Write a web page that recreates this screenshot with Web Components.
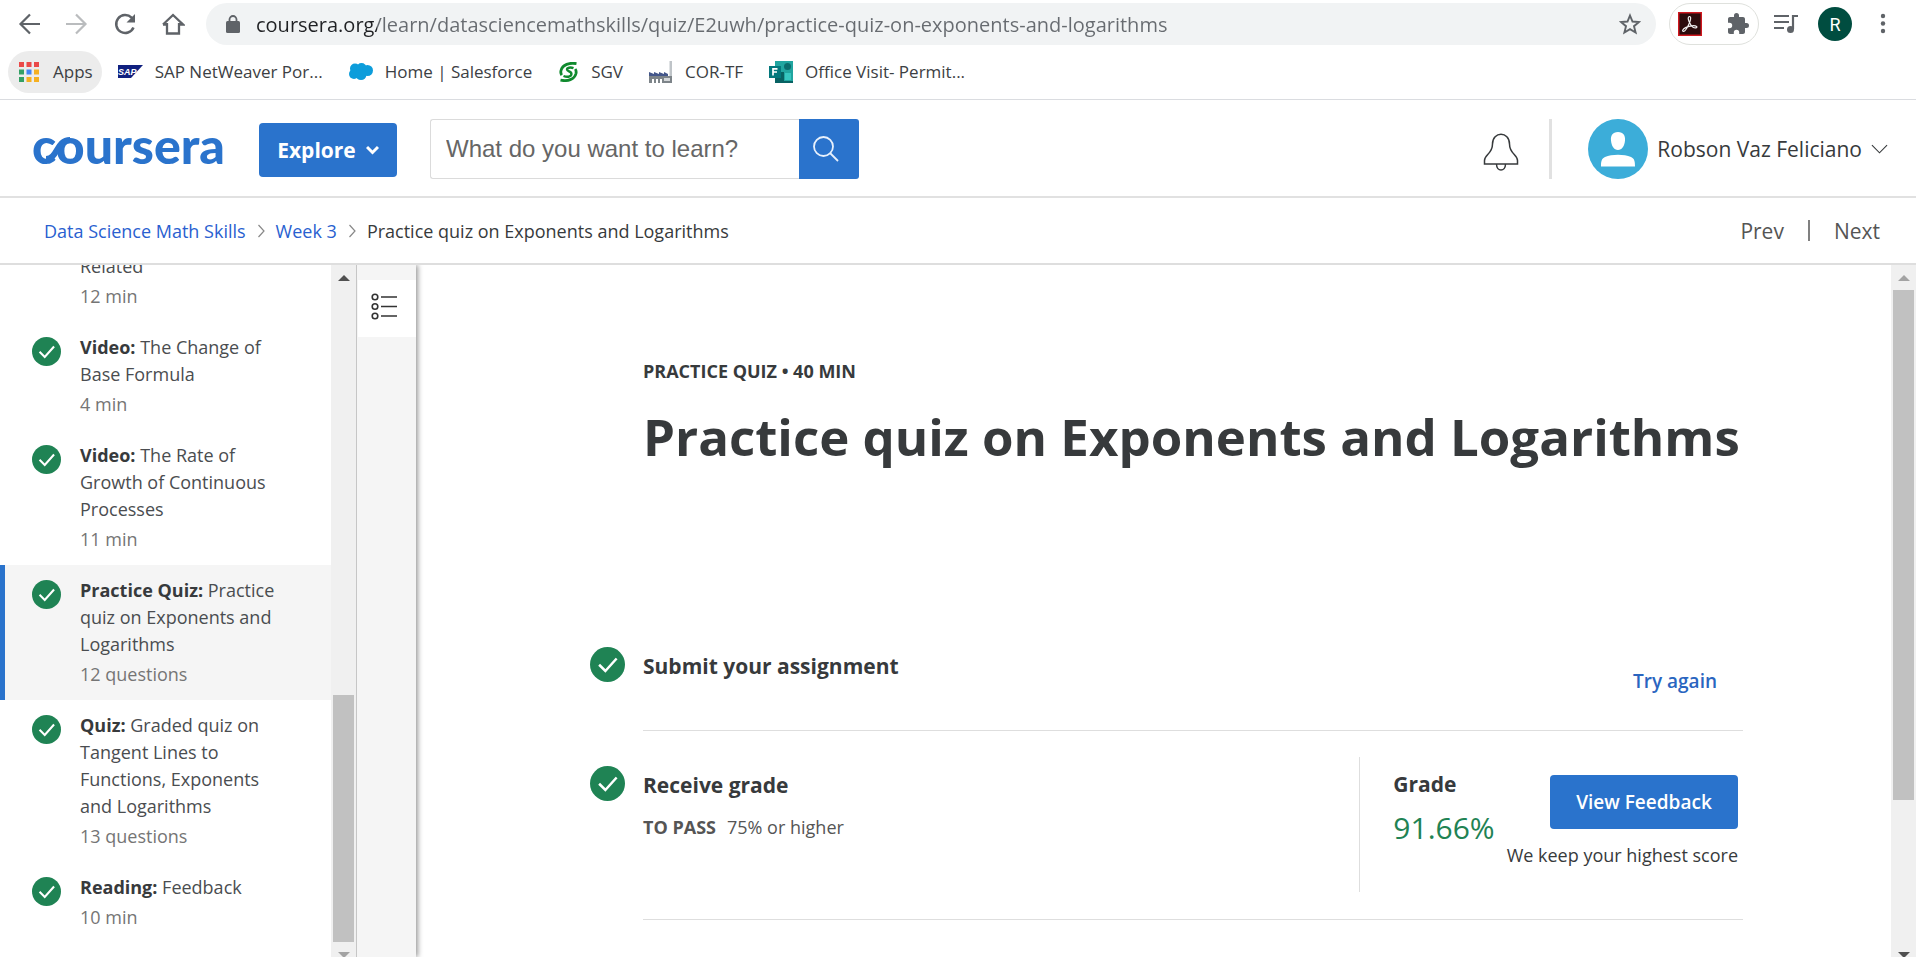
<!DOCTYPE html>
<html lang="en">
<head>
<meta charset="utf-8">
<title>Practice quiz on Exponents and Logarithms | Coursera</title>
<style>
html, body { margin: 0; height: 100%; }
body { background: #fff; color: #373a3c; font-family: "Open Sans", "Noto Sans", sans-serif; overflow: hidden; }
</style>
</head>
<body>
<quiz-app></quiz-app>

<script>
const base = `*{box-sizing:border-box}button{font:inherit;color:inherit;background:none;border:0;padding:0;margin:0;display:flex;align-items:center;justify-content:center;cursor:pointer}a{text-decoration:none;color:inherit}svg{display:block;flex:none}`;
function define(name, css, html, init) {
  customElements.define(name, class extends HTMLElement {
    connectedCallback() {
      if (this.shadowRoot) return;
      const root = this.attachShadow({ mode: 'open' });
      root.innerHTML = `<style>${base}${css}</style>` + (typeof html === 'function' ? html(this) : html);
      if (init) init(this, root);
    }
  });
}

define('check-mark',
  `:host{display:block;flex:none;width:var(--mark,29px);height:var(--mark,29px)}svg{width:100%;height:100%}`,
  `<svg viewBox="0 0 28 28" role="img" aria-label="Completed"><circle cx="14" cy="14" r="14" fill="#1f8354"/><path d="M7.300 14.200l5 5 9-10" fill="none" stroke="#fff" stroke-width="2"/></svg>`);

define('scroll-bar',
  `:host{display:flex;flex-direction:column;flex:none;width:25px;height:calc(100% + 10px);padding:0 2px;background:#f0f0f0}
   button{height:25px;flex:none;width:100%}.thumb{background:#c1c1c1}`,
  el => `<button aria-label="Scroll up"><svg width="12" height="6"><path d="M0 6L6 0l6 6z" fill="${el.getAttribute('up')}"/></svg></button>
   <div style="flex:${el.getAttribute('before')} 0 0"></div><div class="thumb" style="flex:${el.getAttribute('thumb')} 0 0"></div><div style="flex:${el.getAttribute('after')} 0 0"></div>
   <button aria-label="Scroll down"><svg width="12" height="6"><path d="M0 0h12L6 6z" fill="${el.getAttribute('down')}"/></svg></button>`);

define('browser-bar',
  `:host{display:flex;align-items:center;height:48px;padding:0 21px 0 15px;color:#5f6368}
   nav{display:flex;gap:20px;margin-right:19px}nav button{width:28px;height:28px}
   .url{flex:1;display:flex;align-items:center;height:42px;border-radius:21px;background:#f1f3f4;padding:0 15px 0 20px;min-width:0}
   input{flex:1;min-width:0;border:0;outline:0;margin:0 16px;padding:0;height:32px;font:20px "Open Sans","Noto Sans",sans-serif;color:#5f6368;
     background:linear-gradient(90deg,#202124 121px,#676b70 121px);-webkit-background-clip:text;background-clip:text;-webkit-text-fill-color:transparent}
   .ext{display:flex;align-items:center;justify-content:space-between;width:90px;height:42px;margin-left:13px;border:1px solid #dfe1dd;border-radius:21px;padding:0 8px}
   .queue{margin:0 19px 0 14px}.user{width:34px;height:34px;border-radius:50%;background:#004d40;color:#fff;font:18px Roboto,sans-serif;margin-right:19px}`,
  `<nav>
    <button aria-label="Back"><svg width="24" height="24" fill="none" stroke="#5f6368" stroke-width="2.2"><path d="M23 12H4M13 2.500L3.500 12l9.500 9.500"/></svg></button>
    <button aria-label="Forward"><svg width="24" height="24" fill="none" stroke="#babcbe" stroke-width="2.200"><path d="M1 12h19M11 2.500l9.500 9.500L11 21.500"/></svg></button>
    <button aria-label="Reload"><svg width="24" height="24" fill="none" stroke="#5f6368" stroke-width="2.500"><path d="M20.500 15.500A9 9 0 1 1 18.600 5.600L20 7"/><path d="M22 2v8.500h-8.500z" fill="#5f6368" stroke="none"/></svg></button>
    <button aria-label="Home"><svg width="24" height="24" fill="none" stroke="#5f6368" stroke-width="2.300"><path d="M6 11v10.500h12V11M2 12.500L12 3l10 9.500H18M2 12.500h4"/></svg></button>
   </nav>
   <div class="url">
    <svg width="14" height="18" viewBox="0 0 14 18"><rect x="0" y="6" width="14" height="12" rx="1.500" fill="#5f6368"/><path d="M3.500 7V4.500a3.500 3.500 0 0 1 7 0V7" fill="none" stroke="#5f6368" stroke-width="1.800"/></svg>
    <input aria-label="Address" value="coursera.org/learn/datasciencemathskills/quiz/E2uwh/practice-quiz-on-exponents-and-logarithms">
    <button aria-label="Bookmark this page"><svg width="22" height="22" viewBox="0 0 22 22" fill="none" stroke="#5f6368" stroke-width="1.900"><path d="M11 2.500l2.500 6 6.500.5-5 4.200 1.600 6.300L11 16.100l-5.600 3.400L7 13.200 2 9l6.500-.5z"/></svg></button>
   </div>
   <div class="ext">
    <button aria-label="Adobe Acrobat"><svg width="24" height="24" viewBox="0 0 24 24"><rect x=".7" y=".7" width="22.600" height="22.600" fill="#2b0b0c" stroke="#d0181f" stroke-width="1.500"/><path d="M11.200 4.500c2.400-.3 1.300 4 .2 6.400-1.700 3.900-4 8-5.700 8.400-1.800.2-1.600-2 2.300-3.900 3.700-1.700 8.800-2.300 10.600-.9 1.300 1.300-1.500 2-3.600.7-2.800-1.900-6.600-9.600-3.800-10.700z" fill="none" stroke="#eee" stroke-width="1.200"/></svg></button>
    <button aria-label="Extensions"><svg width="24" height="24" viewBox="0 0 24 24" fill="#5f6368"><path d="M20.500 11H19V7c0-1.100-.9-2-2-2h-4V3.500a2.500 2.500 0 0 0-5 0V5H4c-1.100 0-2 .9-2 2v3.800h1.500a2.700 2.700 0 0 1 0 5.400H2V20c0 1.100.9 2 2 2h3.800v-1.500a2.700 2.700 0 0 1 5.400 0V22H17c1.100 0 2-.9 2-2v-4h1.500a2.500 2.500 0 0 0 0-5z"/></svg></button>
   </div>
   <button class="queue" aria-label="Media controls"><svg width="26" height="22" viewBox="0 0 26 22" fill="none" stroke="#5f6368" stroke-width="2.200"><path d="M1 3h15M1 9h15M1 15h10"/><path d="M25 3h-5v13"/><circle cx="17.500" cy="16.500" r="3.500" fill="#5f6368" stroke="none"/></svg></button>
   <button class="user" aria-label="Profile">R</button>
   <button aria-label="Menu"><svg width="24" height="22" viewBox="0 0 24 22" fill="#5f6368"><circle cx="12" cy="3" r="2.200"/><circle cx="12" cy="10.500" r="2.200"/><circle cx="12" cy="18" r="2.200"/></svg></button>`);

define('bookmark-link',
  `:host{display:block;flex:none}a{display:flex;align-items:center;gap:12px;height:42px;font-size:17px;line-height:24px;color:#3c4043;white-space:nowrap}
   ::slotted(svg){display:block;flex:none}:host([pill]) a{background:#ececec;border-radius:21px;padding:0 9px 0 10px;gap:13px}`,
  `<a href="#"><slot name="icon"></slot><span><slot></slot></span></a>`);

define('bookmark-bar',
  `:host{display:flex;align-items:center;gap:26px;height:52px;padding:0 8px 4px;border-bottom:1px solid #dadce0}
   bookmark-link[pill]{margin-right:-10px}`,
  `<bookmark-link pill><svg slot="icon" width="22" height="20" viewBox="0 0 22 20"><g fill="#ea4949"><path d="M1 0h5v5H1zM8.500 0h5v5h-5zM16 0h5v5h-5z"/></g><path d="M1 7.500h5v5H1z" fill="#34a065"/><path d="M8.500 7.500h5v5h-5z" fill="#4285f4"/><path d="M16 7.500h5v5h-5zM8.500 15h5v5h-5zM16 15h5v5h-5z" fill="#f5b021"/><path d="M1 15h5v5H1z" fill="#34a065"/></svg>Apps</bookmark-link>
   <bookmark-link><svg slot="icon" width="25" height="13" viewBox="0 0 25 13"><path d="M0 0h25L13 13H0z" fill="#10207f"/><text x="0" y="10" font-family="Liberation Sans" font-weight="700" font-style="italic" font-size="9" fill="#fff">SAP</text></svg>SAP NetWeaver Por...</bookmark-link>
   <bookmark-link><svg slot="icon" width="24" height="17" viewBox="0 0 24 17" fill="#0d9ddb"><circle cx="6" cy="5.500" r="5"/><circle cx="12.500" cy="5" r="5"/><circle cx="18.500" cy="7.500" r="5.500"/><circle cx="5" cy="11" r="5"/><circle cx="12" cy="11.500" r="5.500"/></svg>Home | Salesforce</bookmark-link>
   <bookmark-link><svg slot="icon" width="21" height="20" viewBox="0 0 21 20" fill="none" stroke="#108a2e"><path d="M15.500 6.200C12.500 5 9 5.600 9 7.600c0 2.200 5 1.600 4.400 4.800-.5 2.600-4.400 3-7.900 1.600" stroke-width="2.400"/><path d="M18.500 1.600C11.500.4 4.500 2.500 3 8.500c-.5 2 0 3.600.8 4.600" stroke-width="2.800"/><path d="M2.500 18.200c7 1.400 14-.6 15.500-6.700.4-2 0-3.500-.8-4.500" stroke-width="2.800"/></svg>SGV</bookmark-link>
   <bookmark-link><svg slot="icon" width="24" height="22" viewBox="0 0 24 22"><path d="M0 11l5 2v-2l5 2v-2l5 2v-2l4 2v2H0z" fill="#44578a"/><path d="M20.500 0H23v15h-2.500z" fill="#bfc4c8"/><path d="M0 15h23v7H13v-4h-2v4H9v-4H7v4H5v-4H3v4H0z" fill="#7d8489"/><path d="M15 17h6v3h-6z" fill="#d5d8da"/></svg>COR-TF</bookmark-link>
   <bookmark-link><svg slot="icon" width="24" height="22" viewBox="0 0 24 22"><path d="M6 0h18v22H6z" fill="#21a5a0"/><circle cx="18.500" cy="5.500" r="3.500" fill="#0a6c6d"/><path d="M6 11h9v11H6zM15 20h9v2h-9z" fill="#086263"/><path d="M16 12h6v7h-6z" fill="#37c6c0"/><path d="M0 5h12v12H0z" fill="#03787c"/><path d="M4 14.500V7.800h4.500M4 11h4" fill="none" stroke="#fff" stroke-width="1.700"/></svg>Office Visit- Permit...</bookmark-link>`);

define('site-header',
  `:host{display:flex;align-items:center;height:98px;border-bottom:2px solid #e1e1e1;padding:2px 28px 0 32px}
   .logo{position:relative;color:#2a73cc;font:900 50px/58px Lato,sans-serif;width:191px;height:66px;flex:none}
   .logo svg{position:absolute;left:0;top:0}
   .explore{width:138px;height:54px;background:#2a73cc;color:#fff;border-radius:4px;font-size:21px;font-weight:700;gap:10px;margin:2px 33px 0 36px;flex:none}
   form{display:flex;width:429px;height:60px;margin:0}
   input{flex:1;min-width:0;border:1px solid #dbdbdb;border-right:0;border-radius:3px 0 0 3px;padding:0 15px;outline:0;font:24px "Liberation Sans",Arial,sans-serif;color:#373a3c}
   input::placeholder{color:#666;opacity:1}
   .go{width:60px;background:#2a73cc;border-radius:0 3px 3px 0;padding-right:6px}
   .bell{margin:6px 30px 0 auto}.rule{width:3px;height:60px;background:#e1e1e1;margin-right:36px}
   .me{gap:9px;font-size:21px;color:#373a3c;white-space:nowrap}`,
  `<a class="logo" href="#" aria-label="Coursera">coursera<svg width="60" height="66" viewBox="0 0 60 66" fill="none" stroke="#2a73cc" stroke-width="6"><path d="M14 43c12 0 10-19 24-19"/></svg></a>
   <button class="explore">Explore<svg width="13" height="10" viewBox="0 0 13 10" fill="none" stroke="#fff" stroke-width="3"><path d="M1 2l5.500 5.500L12 2"/></svg></button>
   <form><input type="search" aria-label="Search" placeholder="What do you want to learn?"><button class="go" type="button" aria-label="Search"><svg width="26" height="26" viewBox="0 0 26 26" fill="none" stroke="#e8f1fc" stroke-width="1.800"><circle cx="10.500" cy="10.500" r="9.500"/><path d="M17 17l8 8"/></svg></button></form>
   <button class="bell" aria-label="Notifications"><svg width="36" height="38" viewBox="0 0 36 38" fill="none" stroke="#373a3c" stroke-width="1.500"><path d="M9.500 11c0-13 17-13 17 0 0 10 8 10.500 8 16.500V31h-33v-3.500c0-6 8-6.500 8-16.500z"/><path d="M13.500 31c0 8 9 8 9 0"/></svg></button>
   <span class="rule"></span>
   <button class="me"><svg width="60" height="60" viewBox="0 0 60 60"><circle cx="30" cy="30" r="30" fill="#3cadd9"/><path d="M30 13c5.500 0 7.500 4 7 8.500-.5 5.500-3 9.500-7 9.500s-6.500-4-7-9.500C22.500 17 24.500 13 30 13zM13 47.500c0-5 .5-8 4-9.500 7-3 19-3 26 0 3.500 1.500 4 4.500 4 9.500z" fill="#fff"/></svg>Robson Vaz Feliciano<svg width="17" height="10" viewBox="0 0 18 10" fill="none" stroke="#373a3c" stroke-width="1.200"><path d="M1 1l8 8 8-8"/></svg></button>`);

define('crumb-bar',
  `:host{display:flex;align-items:center;justify-content:space-between;height:67px;border-bottom:2px solid #dedede;padding:0 36px 0 44px}
   nav{display:flex;align-items:center;font-size:18px;line-height:24px;white-space:nowrap}nav a{color:#2a5fd0}nav svg{margin:0 11px 0 12px}
   .steps{font-size:21px;color:#555;gap:24px}.steps a{color:inherit}.steps span{width:2px;height:21px;background:#808080}`,
  el => { const c = `<svg width="7" height="14" viewBox="0 0 7 14" fill="none" stroke="#888" stroke-width="1.200"><path d="M.500 1L6 7 .500 13"/></svg>`;
   return `<nav aria-label="Breadcrumb"><a href="#">Data Science Math Skills</a>${c}<a href="#">Week 3</a>${c}<span>Practice quiz on Exponents and Logarithms</span></nav>
   <nav class="steps" aria-label="Lesson steps"><a href="#">Prev</a><span></span><a href="#">Next</a></nav>`; });

define('lesson-item',
  `:host{display:block}a{display:flex;gap:19px;padding:12px 51px 12px 27px;border-left:5px solid transparent;font-size:18px;line-height:27px;color:#4a4d50}
   check-mark{margin-top:3px}:host([continued]) check-mark{visibility:hidden}:host([current]) a{background:#f5f5f5;border-color:#2a73cc}
   p{margin:0}.meta{margin-top:3px;color:#757575}b{font-weight:700;color:#373a3c}`,
  el => `<a href="#"><check-mark></check-mark><div><p>${el.hasAttribute('kind') ? `<b>${el.getAttribute('kind')}:</b> ` : ''}<slot></slot></p><p class="meta">${el.getAttribute('meta')}</p></div></a>`);

define('lesson-list',
  `:host{display:flex;flex:none;width:357px;overflow:hidden;border-right:1px solid #c6c6c6}
   .items{flex:1;min-width:0;overflow:hidden;padding-bottom:14px}`,
  `<div class="items">
    <lesson-item continued meta="12 min">Related</lesson-item>
    <lesson-item kind="Video" meta="4 min">The Change of Base Formula</lesson-item>
    <lesson-item kind="Video" meta="11 min">The Rate of Growth of Continuous Processes</lesson-item>
    <lesson-item current kind="Practice Quiz" meta="12 questions">Practice quiz on Exponents and Logarithms</lesson-item>
    <lesson-item kind="Quiz" meta="13 questions">Graded quiz on Tangent Lines to Functions, Exponents and Logarithms</lesson-item>
    <lesson-item kind="Reading" meta="10 min">Feedback</lesson-item>
   </div><scroll-bar up="#505050" down="#a3a3a3" before="405" thumb="247" after="0"></scroll-bar>`,
  (el, root) => { root.querySelector('.items').scrollTop = 24; });

define('side-rail',
  `:host{display:block;flex:none;width:59px;background:#f5f5f5;padding:15px 0 0 1px;box-shadow:2px 0 5px rgba(0,0,0,.4);clip-path:inset(0 -10px 0 0)}
   button{width:100%;height:57px;background:#fff;padding:0 6px 4px 0}`,
  `<button aria-label="Lesson outline"><svg width="26" height="27" viewBox="0 0 26 27" fill="none" stroke="#333" stroke-width="1.600"><circle cx="4" cy="4" r="2.800"/><circle cx="4" cy="13.500" r="2.800"/><circle cx="4" cy="23" r="2.800"/><path d="M10 4h16M10 13.500h16M10 23h16"/></svg></button>`);

define('quiz-step',
  `:host{display:grid;grid-template-columns:35px 1fr;column-gap:18px;--mark:35px}
   .body{display:flex;justify-content:space-between;border-bottom:1px solid #dedede}
   check-mark{margin-top:35px}.text{padding-top:40px}h2{margin:0;font-size:21px;line-height:28px;font-weight:700;color:#373a3c}`,
  `<check-mark></check-mark><div class="body"><div class="text"><h2><slot name="title"></slot></h2><slot></slot></div><slot name="side"></slot></div>`);

define('quiz-page',
  `:host{display:flex;flex:1;min-width:0;overflow:hidden}
   main{flex:1;min-width:0;padding:92px 148px 0 174px}
   .kicker{margin:0 0 0 53px;font-size:18px;line-height:28px;font-weight:700}
   h1{margin:13px 0 138px 53px;font-size:51px;line-height:76px;font-weight:700;color:#373a3c;white-space:nowrap}
   .try{color:#2a65c0;font-size:19px;line-height:28px;font-weight:600;margin:55px 26px 35px 0}
   .pass{margin:14px 0 0;font-size:18px;line-height:28px;color:#555}.pass b{margin-right:11px}
   .result{display:flex;margin:26px 5px 27px 0;border-left:1px solid #dedede;padding-left:33px;height:135px;gap:12px}
   .grade{padding-top:13px;font-size:21px;line-height:28px;font-weight:700}
   .score{display:block;margin-top:8px;font-size:30px;line-height:44px;font-weight:400;color:#1f8354}
   .feedback{display:flex;flex-direction:column;align-items:flex-end;padding-top:18px;font-size:18px;line-height:28px;white-space:nowrap}
   .feedback button{width:188px;height:54px;background:#2a73cc;color:#fff;font-size:19px;font-weight:600;border-radius:4px;margin-bottom:12px}`,
  `<main><p class="kicker">PRACTICE QUIZ • 40 MIN</p><h1>Practice quiz on Exponents and Logarithms</h1>
    <quiz-step><span slot="title">Submit your assignment</span><button class="try" slot="side">Try again</button></quiz-step>
    <quiz-step><span slot="title">Receive grade</span><p class="pass"><b>TO PASS</b>75% or higher</p>
     <div class="result" slot="side"><div class="grade">Grade<span class="score">91.66%</span></div><div class="feedback"><button>View Feedback</button>We keep your highest score</div></div></quiz-step>
   </main><scroll-bar up="#a3a3a3" down="#505050" before="0" thumb="510" after="142"></scroll-bar>`);

define('quiz-app',
  `:host{display:flex;flex-direction:column;height:100vh;overflow:hidden}browser-bar,bookmark-bar,site-header,crumb-bar{flex:none}
   .work{display:flex;flex:1;min-height:0}`,
  `<browser-bar></browser-bar><bookmark-bar></bookmark-bar><site-header></site-header><crumb-bar></crumb-bar>
   <div class="work"><lesson-list></lesson-list><side-rail></side-rail><quiz-page></quiz-page></div>`);
</script>
</body>
</html>
